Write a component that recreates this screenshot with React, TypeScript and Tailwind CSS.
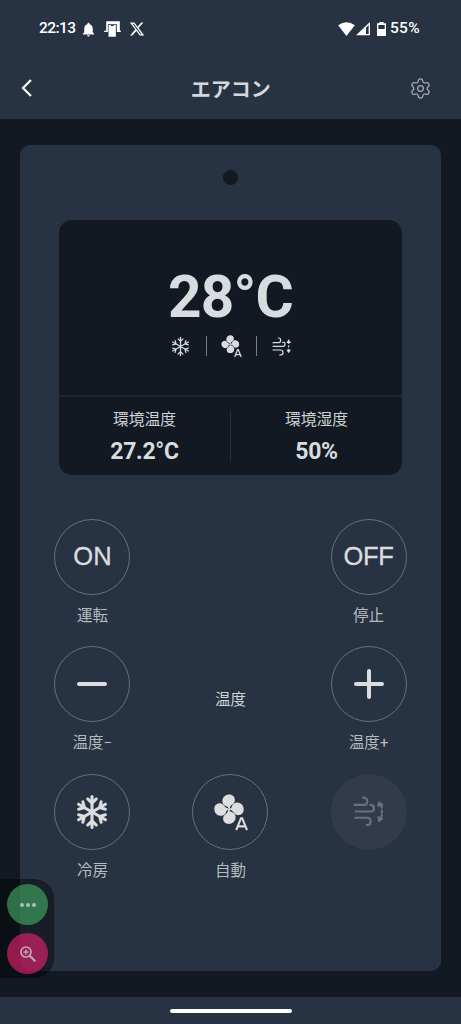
import React from 'react';
import { Settings } from 'lucide-react';
import { FaXTwitter } from 'react-icons/fa6';
import { MdNotifications } from 'react-icons/md';

interface IconProps {
  className?: string;
}

const SnowflakeIcon: React.FC<IconProps & { strokeWidth: number }> = ({ className, strokeWidth }) => (
  <svg viewBox="-18 -18 36 36" className={className} fill="none" stroke="currentColor" strokeWidth={strokeWidth} strokeLinecap="round" strokeLinejoin="round">
    {[0, 60, 120, 180, 240, 300].map((angle) => (
      <path key={angle} d="M0 0V-15.5M-4.2 -13L0 -8.8L4.2 -13" transform={`rotate(${angle})`} />
    ))}
  </svg>
);

const FanAutoIcon: React.FC<IconProps> = ({ className }) => (
  <svg viewBox="0 0 34 38" className={className} fill="currentColor">
    <g transform="translate(15 15.2)">
      {[0, 90, 180, 270].map((angle) => (
        <path
          key={angle}
          d="M-.2 .2C-.6 -2.2 -2 -3 -4.2 -3.4C-5.9 -4.6 -6.7 -6.6 -6.6 -8.6C-6.4 -12.2 -3.4 -14.7 .2 -14.7C3.8 -14.7 6 -12.2 5.9 -9C5.8 -6 3.2 -5.2 1.7 -3.2C.9 -2.1 .8 -1 .6 .2Z"
          transform={`rotate(${angle})`}
        />
      ))}
    </g>
    <path d="M22.2 36.2L27 24.2H28.2L33 36.2M23.8 32.4H31.4" fill="none" stroke="currentColor" strokeWidth="2.1" />
  </svg>
);

const SwingIcon: React.FC<IconProps> = ({ className }) => (
  <svg viewBox="0 0 93 94" className={className} fill="none" stroke="currentColor" strokeWidth="6.5" strokeLinecap="round">
    <path d="M4 27H33C40 27 43 22 43 16C43 9 37 4 30 5" />
    <path d="M8 47H54C60 47 63 42 63 37C63 31 58 27 52 27" />
    <path d="M6 66H42C49 66 53 71 53 77C53 84 48 88 41 88" />
    <path d="M82 24Q86 31 87 36M87 44V51M87 58Q86 65 81 71" />
    <path d="M78 18L75 31L90 27ZM78 77L75 63L89 69Z" fill="currentColor" strokeWidth="4" strokeLinejoin="round" />
  </svg>
);

const SwingSmallIcon: React.FC<IconProps> = ({ className }) => (
  <svg viewBox="0 0 57 57" className={className} fill="none" stroke="currentColor" strokeWidth="3.6" strokeLinecap="round">
    <path d="M3 17H20C25 17 26 13 26 9C26 5 23 3 19 3" />
    <path d="M3 28H33C37 28 39 25 39 21C39 17 36 15 32 16" />
    <path d="M3 39H24C29 39 33 42 33 47C33 52 29 54 23 54" />
    <path d="M50 15V19M50 27V29M50 37V41" strokeWidth="4" />
    <path d="M50 7L43 18H57ZM50 49L43 38H57Z" fill="currentColor" stroke="none" />
  </svg>
);

const StatusBar = () => (
  <div className="flex h-[58px] items-center justify-between pl-[39px] pr-[40px] text-[15.5px] font-medium text-white">
    <div className="flex items-center">
      <span className="w-[37px] tracking-[-0.55px]">22:13</span>
      <MdNotifications className="ml-[3.5px] h-[17px] w-[17px]" />
      <svg viewBox="0 0 50 48" className="ml-[7px] h-4 w-[17px]">
        <path d="M6 1H47V29H50V33H38V10H11V33H0V29H6Z" fill="#fff" />
        <path d="M13 12H20V15H29V12H35V47H13Z" fill="#fff" />
      </svg>
      <FaXTwitter className="ml-[8px] h-4 w-4" />
    </div>
    <div className="flex items-center">
      <svg viewBox="0 0 50 42" className="h-[14px] w-[17px]">
        <path d="M0 10Q25 -9 50 10L25 42Z" fill="#fff" />
      </svg>
      <svg viewBox="0 0 42 42" className="ml-[1px] h-[14px] w-[14px]">
        <path d="M0 40L42 0V40ZM30 17V36H38V9Z" fill="#fff" fillRule="evenodd" />
      </svg>
      <svg viewBox="0 0 27 42" className="ml-[7px] h-[14px] w-[9px]">
        <path d="M7 4V0H20V4H27V42H0V4ZM4 9V21H23V9Z" fill="#fff" fillRule="evenodd" />
      </svg>
      <span className="ml-[4px] w-[31px] tracking-[0.3px]">55%</span>
    </div>
  </div>
);

const Header = () => (
  <header className="h-[119px] bg-[#273242]">
    <StatusBar />
    <div className="flex h-[60px] items-center justify-between pl-[21px] pr-[29.5px]">
      <button type="button" aria-label="Back" className="w-[23px] text-white">
        <svg viewBox="0 0 12 18" className="h-[18px] w-3" fill="none" stroke="currentColor" strokeWidth="2.2">
          <path d="M10 1L2 9L10 17" />
        </svg>
      </button>
      <h1 className="ml-[9px] pt-[3px] text-[20px] font-bold text-[#d4d7db]">エアコン</h1>
      <button type="button" aria-label="Settings" className="text-[#a9aeb4]">
        <Settings size={23} strokeWidth={1.3} />
      </button>
    </div>
  </header>
);

interface ReadingProps {
  label: string;
  value: string;
}

const Reading: React.FC<ReadingProps> = ({ label, value }) => (
  <div className="flex flex-1 flex-col items-center">
    <span className="text-[15.8px] leading-[24px] text-[#cfd2d5]">{label}</span>
    <span className="mt-[4px] text-[23px] font-bold leading-[32px] tracking-[-0.3px]">{value}</span>
  </div>
);

const Display = () => (
  <section className="mx-auto h-[255px] w-[343px] rounded-[13px] bg-[#121922] text-[#d9dcdf]">
    <div className="flex h-[177px] flex-col items-center border-b-2 border-[#1e2630] pt-[43px]">
      <div className="text-[58.5px] font-bold leading-[68px] tracking-[-0.8px]">28°C</div>
      <div className="mt-[3.5px] flex items-center">
        <SnowflakeIcon className="h-[21px] w-[21px]" strokeWidth={2.2} />
        <span className="ml-[14.5px] h-5 w-px bg-[#7b8086]" />
        <FanAutoIcon className="ml-[14px] h-[23px] w-[21px]" />
        <span className="ml-[14px] h-5 w-px bg-[#7b8086]" />
        <SwingSmallIcon className="ml-[15px] h-[19px] w-[19px]" />
      </div>
    </div>
    <div className="flex h-[78px] pt-[11px]">
      <Reading label="環境温度" value="27.2°C" />
      <span className="mt-[2px] h-[52px] w-px bg-[#252d37]" />
      <Reading label="環境湿度" value="50%" />
    </div>
  </section>
);

interface RemoteButtonProps {
  label?: string;
  disabled?: boolean;
  children: React.ReactNode;
}

const RemoteButton: React.FC<RemoteButtonProps> = ({ label, disabled, children }) => (
  <div className="flex flex-col items-center">
    <button
      type="button"
      disabled={disabled}
      className={`flex h-[76px] w-[76px] items-center justify-center rounded-full ${
        disabled ? 'bg-[#313b4b] text-[#69727c]' : 'border-[1.5px] border-[#69717b] text-[#dbdddf]'
      }`}
    >
      {children}
    </button>
    <span className="mt-[9px] text-[15.5px] leading-[24px] text-[#b5babe]">{label}</span>
  </div>
);

const Controls = () => (
  <div className="mt-[43.5px] grid auto-rows-[127.6px] grid-cols-3 px-[3px]">
    <RemoteButton label="運転">
      <span className="font-['Liberation_Sans'] text-[25.5px] [-webkit-text-stroke:0.3px]">ON</span>
    </RemoteButton>
    <div />
    <RemoteButton label="停止">
      <span className="font-['Liberation_Sans'] text-[25.5px] tracking-[-0.3px] [-webkit-text-stroke:0.3px]">OFF</span>
    </RemoteButton>

    <RemoteButton label="温度−">
      <span className="h-1 w-[30px] rounded-full bg-current" />
    </RemoteButton>
    <div className="pt-[42px] text-center text-[15.5px] leading-[24px] text-[#d0d3d6]">温度</div>
    <RemoteButton label="温度+">
      <svg viewBox="0 0 30 30" className="h-[30px] w-[30px]" stroke="currentColor" strokeWidth="4" strokeLinecap="round">
        <path d="M2 15H28M15 2V28" />
      </svg>
    </RemoteButton>

    <RemoteButton label="冷房">
      <SnowflakeIcon className="h-9 w-9" strokeWidth={3.1} />
    </RemoteButton>
    <RemoteButton label="自動">
      <FanAutoIcon className="ml-px mt-[2px] h-[38px] w-[34px]" />
    </RemoteButton>
    <RemoteButton disabled>
      <SwingIcon className="h-[31px] w-[31px]" />
    </RemoteButton>
  </div>
);

const FloatingTools = () => (
  <div className="absolute left-0 top-[879px] flex h-[99px] w-[54px] flex-col gap-[8px] rounded-r-[20px] border border-l-0 border-black/10 bg-black/40 pl-[7px] pt-[4px]">
    <button type="button" aria-label="More" className="flex h-[41px] w-[41px] items-center justify-center gap-[2px] rounded-full bg-[#45b167]/60">
      <i className="h-1 w-1 rounded-full bg-[#b1b8b8]" />
      <i className="h-1 w-1 rounded-full bg-[#b1b8b8]" />
      <i className="h-1 w-1 rounded-full bg-[#b1b8b8]" />
    </button>
    <button type="button" aria-label="Zoom" className="flex h-[41px] w-[41px] items-center justify-center rounded-full bg-[#f22073]/60 text-[#c0a5b2]">
      <svg viewBox="0 0 16 16" className="h-4 w-4" fill="none" stroke="currentColor" strokeWidth="1.7">
        <circle cx="6" cy="6" r="5" />
        <path d="M9.7 9.7L15.3 15.3" strokeWidth="2.2" />
        <path d="M6 3.4V8.6M3.4 6H8.6" strokeWidth="1.5" />
      </svg>
    </button>
  </div>
);

const App = () => (
  <div className="relative flex h-[1024px] w-[461px] flex-col overflow-hidden bg-[#121922] font-['Roboto','Noto_Sans_CJK_JP',sans-serif]" lang="ja">
    <Header />
    <main className="mx-[20.4px] mt-[26px] h-[826px] rounded-[10px] bg-[#273242]">
      <div className="flex h-[75px] justify-center pt-[25px]">
        <span className="h-[15px] w-[15px] rounded-full bg-[#121922]" />
      </div>
      <Display />
      <Controls />
    </main>
    <footer className="mt-auto flex h-[27px] justify-center bg-[#273242] pt-[12px]">
      <span className="h-[4px] w-[122px] rounded-full bg-white" />
    </footer>
    <FloatingTools />
  </div>
);

export default App;
